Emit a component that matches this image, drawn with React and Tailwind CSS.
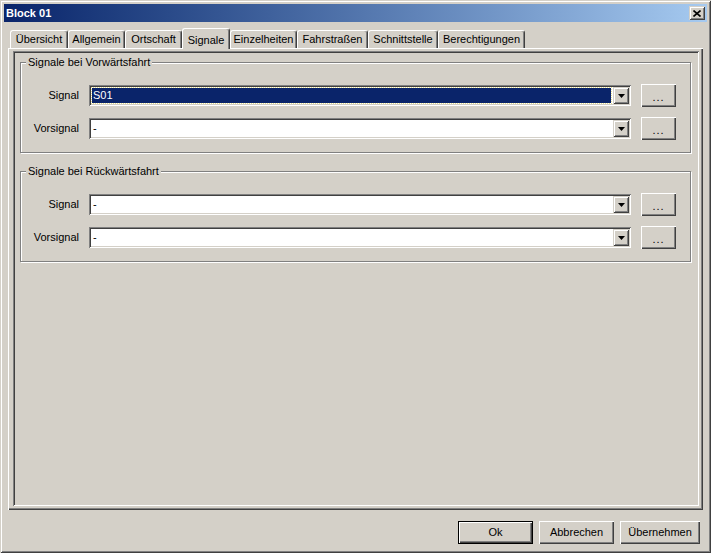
import React from "react";

const raised =
  "shadow-[inset_1px_1px_0_#ffffff,inset_-1px_-1px_0_#404040,inset_-2px_-2px_0_#808080]";
const raisedCombo =
  "shadow-[inset_1px_1px_0_#d4d0c8,inset_-1px_-1px_0_#404040,inset_2px_2px_0_#ffffff,inset_-2px_-2px_0_#808080]";
const sunken =
  "shadow-[inset_1px_1px_0_#808080,inset_-1px_-1px_0_#ffffff,inset_2px_2px_0_#404040,inset_-2px_-2px_0_#d4d0c8]";

const tabs = [
  { label: "Übersicht", w: "w-[58px]" },
  { label: "Allgemein", w: "w-[57px]" },
  { label: "Ortschaft", w: "w-[57px]" },
  { label: "Signale", w: "w-[48px]", active: true },
  { label: "Einzelheiten", w: "w-[67px]" },
  { label: "Fahrstraßen", w: "w-[71px]" },
  { label: "Schnittstelle", w: "w-[70px]" },
  { label: "Berechtigungen", w: "w-[87px]" },
];

function Tab({ label, w, active }) {
  if (active) {
    return (
      <div
        className={`${w} h-[21px] mb-[-1px] relative z-10 bg-[#d4d0c8] flex items-start justify-center pt-[3px] border-t border-l border-white border-r border-r-[#404040] rounded-t-[3px] shadow-[inset_-1px_0_0_#808080]`}
      >
        {label}
      </div>
    );
  }
  return (
    <div
      className={`${w} h-[18px] bg-[#d4d0c8] flex items-center justify-center border-t border-l border-white border-r border-r-[#404040] rounded-t-[3px] shadow-[inset_-1px_0_0_#808080]`}
    >
      {label}
    </div>
  );
}

function Combo({ value, selected }) {
  return (
    <div className={`w-[542px] h-[21px] bg-white ${sunken} flex p-[2px]`}>
      <div className="flex-1 flex items-stretch">
        {selected ? (
          <div className="flex-1 m-[1px] mr-[2px] bg-[#0a246a] text-white outline-1 outline-dotted outline-[#e8e090] flex items-center pl-[1px]">
            {value}
          </div>
        ) : (
          <div className="flex-1 flex items-center pl-[2px]">{value}</div>
        )}
      </div>
      <div className={`w-[16px] h-[17px] bg-[#d4d0c8] ${raisedCombo} flex items-center justify-center`}>
        <svg width="7" height="4" viewBox="0 0 7 4">
          <path d="M0 0H7L3.5 4Z" fill="#000" />
        </svg>
      </div>
    </div>
  );
}

function Row({ label, value, selected }) {
  return (
    <div className="h-[23px] flex items-center">
      <div className="w-[58px] text-right">{label}</div>
      <div className="ml-[10px]">
        <Combo value={value} selected={selected} />
      </div>
      <div
        className={`ml-[10px] w-[35px] h-[23px] bg-[#d4d0c8] ${raised} flex items-center justify-center pt-[3px] tracking-[1px]`}
      >
        ...
      </div>
    </div>
  );
}

function Group({ title, className, rows }) {
  return (
    <div
      className={`relative w-[671px] h-[91px] border border-[#808080] shadow-[inset_1px_1px_0_#ffffff,1px_1px_0_#ffffff] pt-[21px] flex flex-col gap-[10px] ${className}`}
    >
      <div className="absolute left-[5px] top-[-8px] bg-[#d4d0c8] px-[2px] leading-[14px]">
        {title}
      </div>
      {rows.map((r, i) => (
        <Row key={i} {...r} />
      ))}
    </div>
  );
}

export default function App() {
  return (
    <div className="w-[711px] h-[553px] bg-[#d4d0c8] p-[4px] flex flex-col font-['Liberation_Sans',Arial,sans-serif] text-[11px] text-black shadow-[inset_1px_1px_0_#d4d0c8,inset_-1px_-1px_0_#404040,inset_2px_2px_0_#ffffff,inset_-2px_-2px_0_#808080]">
      <div className="h-[18px] flex items-center justify-between bg-linear-to-r from-[#0a246a] to-[#a6caf0] pl-[2px] pr-[2px]">
        <span className="text-white font-bold">Block 01</span>
        <div className={`w-[16px] h-[14px] bg-[#d4d0c8] ${raisedCombo} flex items-center justify-center`}>
          <svg width="8" height="7" viewBox="0 0 8 7">
            <path d="M0.5 0.5L7.5 6.5M7.5 0.5L0.5 6.5" stroke="#000" strokeWidth="1.6" />
          </svg>
        </div>
      </div>

      <div className="mt-[6px] ml-[4px] w-[695px] flex flex-col">
        <div className="h-[20px] pl-[2px] flex items-end relative z-10">
          {tabs.map((t) => (
            <Tab key={t.label} {...t} />
          ))}
        </div>
        <div className="h-[462px] bg-[#d4d0c8] shadow-[inset_1px_1px_0_#ffffff,inset_-1px_-1px_0_#404040,inset_-2px_-2px_0_#808080] pt-[3px] pl-[5px] pr-[4px] pb-[4px] flex">
          <div className={`flex-1 ${sunken} pt-[11px] pl-[7px] flex flex-col`}>
            <Group
              title="Signale bei Vorwärtsfahrt"
              rows={[
                { label: "Signal", value: "S01", selected: true },
                { label: "Vorsignal", value: "-" },
              ]}
            />
            <Group
              title="Signale bei Rückwärtsfahrt"
              className="mt-[18px]"
              rows={[
                { label: "Signal", value: "-" },
                { label: "Vorsignal", value: "-" },
              ]}
            />
          </div>
        </div>
      </div>

      <div className="mt-[11px] flex justify-end gap-[6px] pr-[7px]">
        <div className="w-[75px] h-[23px] border border-black">
          <div className={`w-full h-full bg-[#d4d0c8] ${raised} flex items-center justify-center`}>Ok</div>
        </div>
        <div className={`w-[75px] h-[23px] bg-[#d4d0c8] ${raised} flex items-center justify-center`}>Abbrechen</div>
        <div className={`w-[80px] h-[23px] bg-[#d4d0c8] ${raised} flex items-center justify-center`}>Übernehmen</div>
      </div>
    </div>
  );
}
